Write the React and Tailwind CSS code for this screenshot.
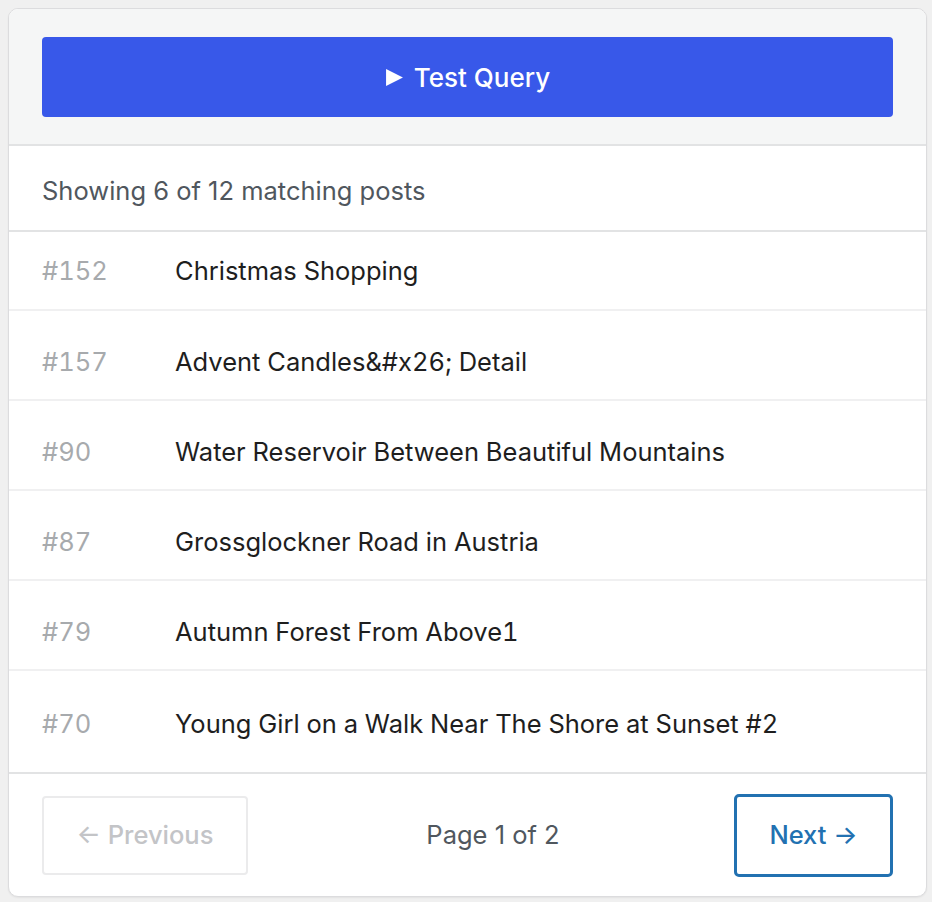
import React from 'react';

const posts = [
  { id: 152, title: 'Christmas Shopping' },
  { id: 157, title: 'Advent Candles&#x26; Detail' },
  { id: 90, title: 'Water Reservoir Between Beautiful Mountains' },
  { id: 87, title: 'Grossglockner Road in Austria' },
  { id: 79, title: 'Autumn Forest From Above1' },
  { id: 70, title: 'Young Girl on a Walk Near The Shore at Sunset #2' },
];

export default function App() {
  return (
    <div
      className="min-h-[902px] bg-[#f0f0f0] pb-2 pl-2 pr-[5px] pt-2"
      style={{ fontFamily: 'Inter, "Noto Sans", sans-serif' }}
    >
      <div className="overflow-hidden rounded-[10px] border border-[#dcdcde] bg-white shadow-[0_1px_2px_rgba(0,0,0,0.06)]">
        {/* query runner */}
        <div className="border-b-2 border-[#e2e3e4] bg-[#f5f6f6] px-[33px] pb-[27px] pt-[28px]">
          <button className="flex h-[80px] w-full items-center justify-center gap-[10px] rounded-[4px] bg-[#3858e9] text-[26px] font-medium text-white">
            <svg width="19" height="19" viewBox="0 0 18 18" aria-hidden="true">
              <path d="M1 1 L17 9 L1 17 Z" fill="currentColor" />
            </svg>
            Test Query
          </button>
        </div>

        <div className="flex h-[86px] items-center border-b-2 border-[#e2e3e4] px-[33px] pt-[7px] text-[25.5px] text-[#50575e]">
          Showing 6 of 12 matching posts
        </div>

        <ul className="tabular-nums">
          {posts.map((p, i) => (
            <li
              key={p.id}
              className={
                i === 0
                  ? 'flex h-[79px] items-center border-b-2 border-[#f0f0f1] px-[33px] pt-[2px] text-[25.5px]'
                  : i === posts.length - 1
                  ? 'flex h-[103px] items-start border-b-2 border-[#e2e3e4] px-[33px] pt-[34px] text-[25.5px]'
                  : 'flex h-[90px] items-center border-b-2 border-[#f0f0f1] px-[33px] pt-[14px] text-[25.5px]'
              }
            >
              <span className="w-[133px] shrink-0 text-[#a7aaad]">#{p.id}</span>
              <span className="text-[#1e1e1e]">{p.title}</span>
            </li>
          ))}
        </ul>

        <div className="flex items-center justify-between px-[33px] pb-[19px] pt-[20px]">
          <button
            disabled
            className="flex h-[79px] w-[206px] items-center justify-center rounded-[4px] border-2 border-[#ebebec] text-[25.5px] font-medium text-[#c3c4c7]"
          >
            ← Previous
          </button>
          <span className="pl-[4px] text-[25.5px] text-[#50575e]">Page 1 of 2</span>
          <button className="flex h-[83px] w-[159px] items-center justify-center rounded-[5px] border-[3px] border-[#2271b1] text-[25.5px] font-medium text-[#2271b1]">
            Next →
          </button>
        </div>
      </div>
    </div>
  );
}
